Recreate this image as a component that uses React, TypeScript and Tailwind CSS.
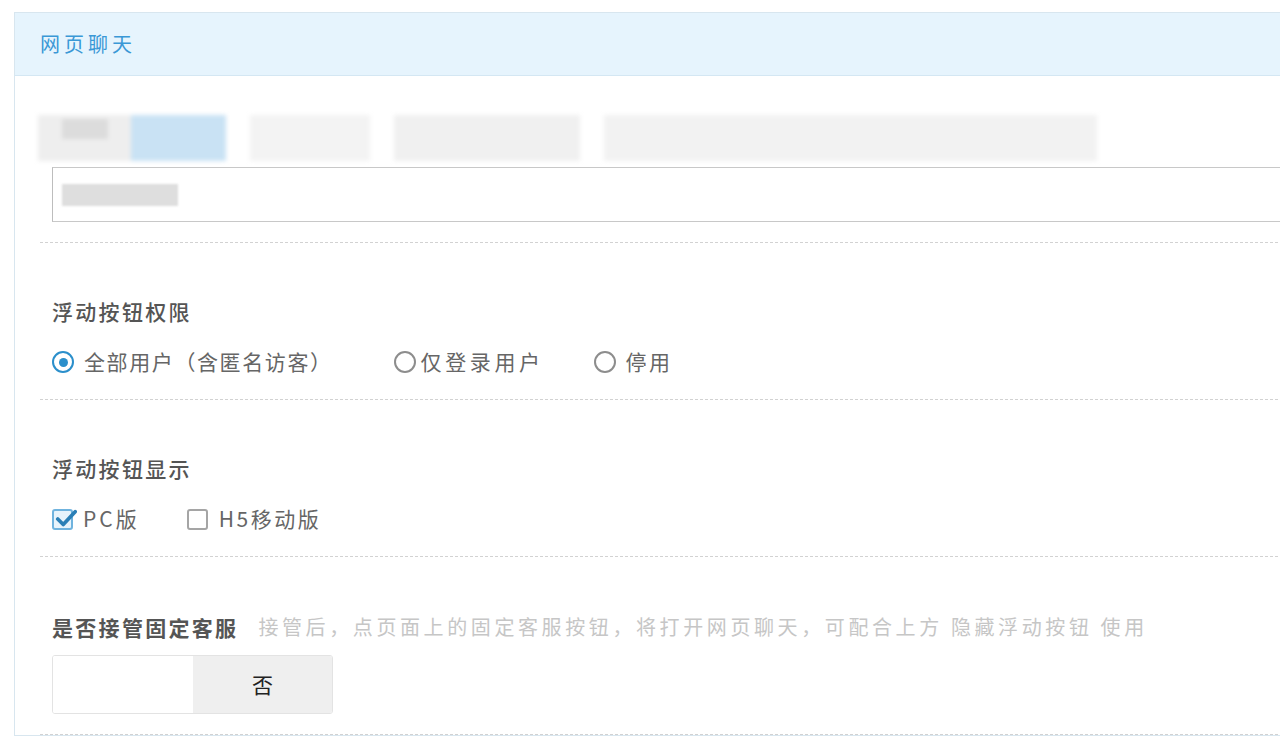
import React from "react";

const font = { fontFamily: '"Noto Sans CJK SC", "Noto Sans", sans-serif' };

function Radio({ checked }: { checked?: boolean }) {
  return checked ? (
    <span className="flex h-[22px] w-[22px] shrink-0 items-center justify-center rounded-full border-[2.5px] border-[#2b8fcb] bg-white">
      <span className="block h-[9px] w-[9px] rounded-full bg-[#2b8fcb]" />
    </span>
  ) : (
    <span className="block h-[22px] w-[22px] shrink-0 rounded-full border-[2.5px] border-[#8d8d8d] bg-white" />
  );
}

function Check({ checked }: { checked?: boolean }) {
  return checked ? (
    <span className="relative flex h-[21px] w-[21px] shrink-0 items-center justify-center rounded-[3px] border-2 border-[#6fb3de] bg-[#e7f3fb]">
      <svg viewBox="0 0 24 24" className="absolute left-[1px] top-[-3px] h-[22px] w-[22px]">
        <path d="M3 12 L9 18 L22 4" fill="none" stroke="#2a7fb6" strokeWidth="4" strokeLinecap="round" strokeLinejoin="round" />
      </svg>
    </span>
  ) : (
    <span className="block h-[21px] w-[21px] shrink-0 rounded-[3px] border-2 border-[#a5a5a5] bg-white" />
  );
}

export default function App() {
  return (
    <div className="h-[739px] w-[1280px] overflow-hidden bg-white" style={font}>
      <div className="ml-[14px] mt-[12px] w-[1300px] border border-[#d8e6ef]">
        <div className="flex h-[63px] items-center border-b border-[#d4e7f3] bg-[#e6f4fd] pl-[25px] text-[20px] tracking-[4px] text-[#3a98d6]">
          网页聊天
        </div>
        <div className="pl-[25px]">
          {/* blurred row */}
          <div className="mt-[39px] flex h-[46px] items-stretch gap-[24px] blur-[2px]">
            <div className="relative -ml-[2px] flex w-[188px]">
              <div className="flex-1 bg-[#eeeeee]">
                <div className="ml-[24px] mt-[4px] h-[20px] w-[46px] bg-[#dcdcdc]" />
              </div>
              <div className="w-[95px] bg-[#c9e2f4]" />
            </div>
            <div className="w-[120px] bg-[#f3f3f3]" />
            <div className="w-[186px] bg-[#f0f0f0]" />
            <div className="w-[493px] bg-[#f2f2f2]" />
          </div>
          {/* input */}
          <div className="ml-[12px] mt-[6px] flex h-[55px] items-center border border-[#c8c8c8] border-l-[#bdbdbd]">
            <div className="ml-[9px] h-[22px] w-[116px] bg-[#dedede] blur-[1px]" />
          </div>
          <div className="mt-[20px] border-t border-dashed border-[#d2d2d2]" />

          {/* section 1 */}
          <div className="pl-[12px] pt-[56px] pb-[25px]">
            <div className="h-[24px] text-[21px] font-medium leading-[24px] tracking-[2.3px] text-[#555]">浮动按钮权限</div>
            <div className="mt-[27px] flex h-[24px] items-center text-[21px] text-[#666]">
              <Radio checked />
              <span className="ml-[10px] tracking-[1.6px]">全部用户（含匿名访客）</span>
              <span className="ml-[61px] flex"><Radio /></span>
              <span className="ml-[5px] tracking-[3.6px]">仅登录用户</span>
              <span className="ml-[50px] flex"><Radio /></span>
              <span className="ml-[10px] tracking-[2.5px]">停用</span>
            </div>
          </div>
          <div className="border-t border-dashed border-[#d2d2d2]" />

          {/* section 2 */}
          <div className="pl-[12px] pt-[56px] pb-[25px]">
            <div className="h-[24px] text-[21px] font-medium leading-[24px] tracking-[2.3px] text-[#555]">浮动按钮显示</div>
            <div className="mt-[27px] flex h-[24px] items-center text-[21px] text-[#666]">
              <Check checked />
              <span className="ml-[10px] tracking-[3px]">PC版</span>
              <span className="ml-[47px] flex"><Check /></span>
              <span className="ml-[11px] tracking-[2.5px]">H5移动版</span>
            </div>
          </div>
          <div className="border-t border-dashed border-[#d2d2d2]" />

          {/* section 3 */}
          <div className="pl-[12px] pt-[58px] pb-[20px]">
            <div className="flex h-[24px] items-center leading-[24px]">
              <span className="text-[21px] font-bold tracking-[2.3px] text-[#555]">是否接管固定客服</span>
              <span className="ml-[20px] text-[20px] tracking-[3.6px] text-[#c6c6c6]">
                接管后，点页面上的固定客服按钮，将打开网页聊天，可配合上方 隐藏浮动按钮 使用
              </span>
            </div>
            <div className="mt-[16px] flex h-[59px] w-[281px] overflow-hidden rounded-[3px] border border-[#e3e3e3]">
              <div className="w-[140px] bg-white" />
              <div className="flex flex-1 items-center justify-center bg-[#efefef] text-[21px] text-[#222]">否</div>
            </div>
          </div>
          <div className="border-t border-dashed border-[#d2d2d2]" />
        </div>
      </div>
    </div>
  );
}
